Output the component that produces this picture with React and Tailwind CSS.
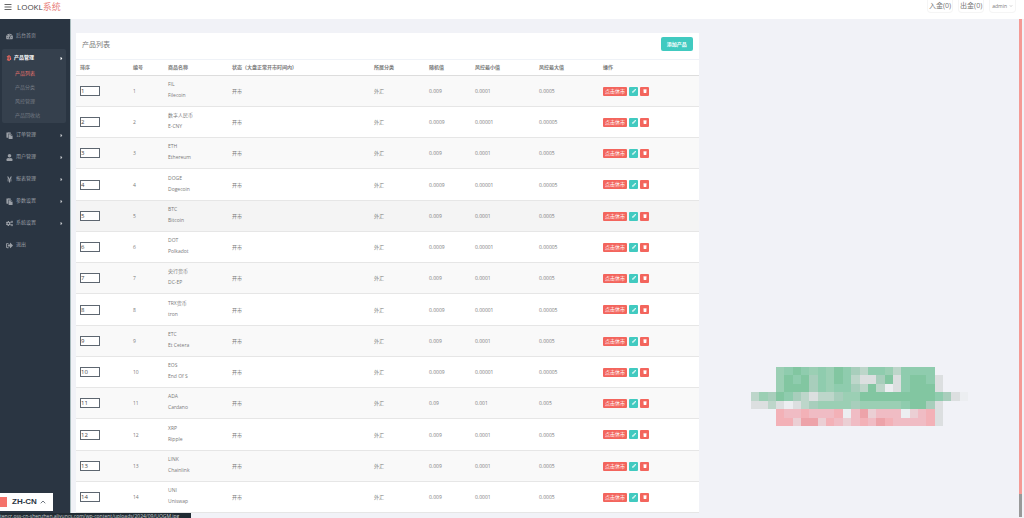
import React, { useState } from 'react';
import {
  FaBars,
  FaBtc,
  FaCaretRight,
  FaCogs,
  FaPaste,
  FaPencilAlt,
  FaSignOutAlt,
  FaTachometerAlt,
  FaTrash,
  FaUser,
  FaYenSign,
} from 'react-icons/fa';
import { ChevronDown, ChevronUp } from 'lucide-react';

const products = [
  { id: 1, name: 'FIL', alias: 'Filecoin', random: '0.009', min: '0.0001', max: '0.0005' },
  { id: 2, name: '数字人民币', alias: 'E-CNY', random: '0.0009', min: '0.00001', max: '0.00005' },
  { id: 3, name: 'ETH', alias: 'Ethereum', random: '0.009', min: '0.0001', max: '0.0005' },
  { id: 4, name: 'DOGE', alias: 'Dogecoin', random: '0.0009', min: '0.00001', max: '0.00005' },
  { id: 5, name: 'BTC', alias: 'Bitcoin', random: '0.009', min: '0.0001', max: '0.0005' },
  { id: 6, name: 'DOT', alias: 'Polkadot', random: '0.0009', min: '0.00001', max: '0.00005' },
  { id: 7, name: '央行货币', alias: 'DC-EP', random: '0.009', min: '0.0001', max: '0.0005' },
  { id: 8, name: 'TRX货币', alias: 'tron', random: '0.0009', min: '0.00001', max: '0.00005' },
  { id: 9, name: 'ETC', alias: 'Et Cetera', random: '0.009', min: '0.0001', max: '0.0005' },
  { id: 10, name: 'EOS', alias: 'End Of S', random: '0.0009', min: '0.00001', max: '0.00005' },
  { id: 11, name: 'ADA', alias: 'Cardano', random: '0.09', min: '0.001', max: '0.005' },
  { id: 12, name: 'XRP', alias: 'Ripple', random: '0.009', min: '0.0001', max: '0.0005' },
  { id: 13, name: 'LINK', alias: 'Chainlink', random: '0.009', min: '0.0001', max: '0.0005' },
  { id: 14, name: 'UNI', alias: 'Uniswap', random: '0.009', min: '0.0001', max: '0.0005' },
];

const columns = [
  { label: '排序', width: 'w-[57px]' },
  { label: '编号', width: 'w-[35px]' },
  { label: '商品名称', width: 'w-[64px]' },
  { label: '状态（大盘正常开市时间内)', width: 'w-[142px]' },
  { label: '所属分类', width: 'w-[55px]' },
  { label: '随机值', width: 'w-[46px]' },
  { label: '风控最小值', width: 'w-[64px]' },
  { label: '风控最大值', width: 'w-[64px]' },
  { label: '操作', width: '' },
];

const productLinks = ['产品列表', '产品分类', '风控管理', '产品回收站'];

const menu = [
  { label: '订单管理', icon: FaPaste, arrow: true },
  { label: '用户管理', icon: FaUser, arrow: true },
  { label: '报表管理', icon: FaYenSign, arrow: true },
  { label: '参数设置', icon: FaPaste, arrow: true },
  { label: '系统设置', icon: FaCogs, arrow: true },
  { label: '退出', icon: FaSignOutAlt, arrow: false },
];

// one letter per tile, see tileColors
const tiles = [
  '...mgGgmgmGglpggmpgggg....',
  '...mGgGlgmGgpwwlGwgGGgw...',
  '...mGGGlgmgglpGpxwgGGGw...',
  'pmlGglpwpplmmGGGGGGGGGglwx',
  'wwpwxwplmmmmlmmmmmgGGlw...',
  '...RPPRPPPRxPDqPPPxqPRw...',
  '...RRqDDqRPqPRPDRPPPPRw...',
];

const tileColors = {
  G: '#82c6a1',
  g: '#8fccae',
  m: '#9bcfb4',
  l: '#a8cebc',
  p: '#bdd6ca',
  w: '#dcdfe0',
  x: '#eceef1',
  P: '#f0bcc4',
  R: '#f3b1b7',
  D: '#eda3a9',
  q: '#ebcfd4',
};

const Mosaic = () => (
  <svg
    viewBox="0 0 26 7"
    preserveAspectRatio="none"
    className="h-[59px] w-[217px]"
    shapeRendering="crispEdges"
    aria-hidden="true"
  >
    {tiles.map((row, y) =>
      row.split('').map((tile, x) =>
        tile === '.' ? null : (
          <rect key={`${x}-${y}`} x={x} y={y} width="1" height="1" fill={tileColors[tile]} />
        )
      )
    )}
  </svg>
);

const Header = () => (
  <header className="flex h-[19px] items-start justify-between bg-white">
    <div className="flex h-3.5 items-center gap-[5px] pl-1">
      <button type="button" aria-label="菜单" className="text-[#666]">
        <FaBars className="h-2 w-2" />
      </button>
      <a href="#" className="text-[8px] leading-[14px] text-[#444]">
        LOOKL<span className="text-[9px] text-[#e8827c]">系统</span>
      </a>
    </div>
    <div className="flex gap-[5px] pr-2 leading-3 text-[#777]">
      <a href="#" className="rounded-b border border-t-0 border-[#f5f5f5] px-px text-[7px]">入金(0)</a>
      <a href="#" className="rounded-b border border-t-0 border-[#f5f5f5] px-px text-[7px]">出金(0)</a>
      <button
        type="button"
        className="flex items-center gap-0.5 rounded-b border border-t-0 border-[#f5f5f5] px-0.5 text-[5px] leading-3"
      >
        admin
        <ChevronDown className="h-1 w-1" />
      </button>
    </div>
  </header>
);

const Sidebar = () => (
  <aside className="w-[71px] shrink-0 border-r border-[#a9bcbe] bg-[#2a3542] pt-1.5 text-[5px] text-[#9a9fa6]">
    <nav>
      <a href="#" className="flex h-[22px] items-center gap-[3px] px-1.5">
        <FaTachometerAlt className="h-[7px] w-[7px]" />
        后台首页
      </a>
      <div className="mt-0.5 mr-1 mb-px ml-0.5 rounded-xs bg-[#35404d]">
        <a href="#" className="flex h-[18px] items-center gap-0.5 pr-0.5 pl-1 font-bold text-white">
          <FaBtc className="h-1.5 w-1.5 text-[#ff6c60]" />
          产品管理
          <FaCaretRight className="ml-auto h-[5px] w-[5px]" />
        </a>
        <ul>
          {productLinks.map((link, i) => (
            <li key={link}>
              <a
                href="#"
                className={
                  i === 0
                    ? 'flex h-3.5 items-center pl-[13px] text-[#ea736c]'
                    : 'flex h-3.5 items-center pl-[13px] text-[#757c85]'
                }
              >
                {link}
              </a>
            </li>
          ))}
        </ul>
      </div>
      {menu.map(({ label, icon: Icon, arrow }) => (
        <a href="#" key={label} className="flex h-[22px] items-center gap-[3px] px-1.5">
          <Icon className="h-[7px] w-[7px]" />
          {label}
          {arrow && <FaCaretRight className="ml-auto h-[5px] w-[5px] text-[#c5c8cc]" />}
        </a>
      ))}
    </nav>
  </aside>
);

const ProductTable = ({ orders, onOrderChange }) => (
  <table className="w-full table-fixed border-collapse text-left text-[5px] text-[#797979]">
    <thead>
      <tr className="h-4 border-t border-b border-t-[#eff2f7] border-b-[#ddd]">
        {columns.map((col) => (
          <th key={col.label} className={`${col.width} p-0 pr-1 first:pl-1 font-bold whitespace-nowrap`}>
            {col.label}
          </th>
        ))}
      </tr>
    </thead>
    <tbody className="[&>tr:nth-child(4n)]:h-8">
      {products.map((p) => (
        <tr
          key={p.id}
          className={`h-[31px] border-b border-[#e6e6e6] ${
            p.id === 5 ? 'bg-[#f4f4f4]' : p.id % 2 ? 'bg-[#f9f9f9]' : 'bg-white'
          }`}
        >
          <td className="p-0 pl-1">
            <input
              type="text"
              aria-label={`排序 ${p.name}`}
              value={orders[p.id]}
              onChange={(e) => onOrderChange(p.id, e.target.value)}
              className="block h-2.5 w-5 border border-[#5d6670] bg-white p-0 text-[6px] leading-none text-[#444]"
            />
          </td>
          <td className="p-0 pt-0.5">{p.id}</td>
          <td className="p-0 pb-0.5 leading-[11px]">
            <div>{p.name}</div>
            <div>{p.alias}</div>
          </td>
          <td className="p-0 pt-0.5">开市</td>
          <td className="p-0 pt-0.5">外汇</td>
          <td className="p-0 pt-0.5">{p.random}</td>
          <td className="p-0 pt-0.5">{p.min}</td>
          <td className="p-0 pt-0.5">{p.max}</td>
          <td className="p-0">
            <div className="flex gap-0.5 text-white">
              <button type="button" className="h-[9px] w-6 rounded-[1px] bg-[#f3655d] text-[5px] leading-[9px]">
                点击休市
              </button>
              <button
                type="button"
                aria-label="编辑"
                className="flex h-[9px] w-[9px] items-center justify-center rounded-[1px] bg-[#41cac0]"
              >
                <FaPencilAlt className="h-1 w-1" />
              </button>
              <button
                type="button"
                aria-label="删除"
                className="flex h-[9px] w-[9px] items-center justify-center rounded-[1px] bg-[#f3655d]"
              >
                <FaTrash className="h-1 w-1" />
              </button>
            </div>
          </td>
        </tr>
      ))}
    </tbody>
  </table>
);

const App = () => {
  const [orders, setOrders] = useState(() =>
    Object.fromEntries(products.map((p) => [p.id, String(p.id)]))
  );

  const handleOrderChange = (id, value) => {
    setOrders((prev) => ({ ...prev, [id]: value }));
  };

  return (
    <div className="flex min-h-screen flex-col bg-[#f1f2f7] font-['Open_Sans','Noto_Sans_CJK_SC',sans-serif]">
      <Header />
      <div className="flex flex-1">
        <Sidebar />
        <main className="flex flex-1 items-start pt-3.5 pb-[5px] pl-[5px]">
          <div className="w-2/3 pr-1.5">
            <section className="bg-white">
              <div className="flex h-[26px] items-start justify-between pt-1 pr-1.5 pl-1.5">
                <h1 className="text-[7px] leading-4 text-[#797979]">产品列表</h1>
                <button
                  type="button"
                  className="h-3.5 rounded-[2px] bg-[#41cac0] px-1.5 text-[5px] leading-[14px] font-bold text-white"
                >
                  添加产品
                </button>
              </div>
              <ProductTable orders={orders} onOrderChange={handleOrderChange} />
            </section>
          </div>
          <div className="flex w-1/3 justify-center pt-[334px] pr-1">
            <Mosaic />
          </div>
        </main>
        <div className="mr-0.5 flex w-[3px] flex-col pb-px">
          <div className="flex-1 bg-[#f59a95]" />
          <div className="h-[23px] bg-[#999]" />
        </div>
      </div>

      <button
        type="button"
        className="fixed bottom-[7px] left-0 flex h-[18px] items-center bg-white pr-1.5 text-[8px] font-bold text-[#2a3542] font-['Liberation_Sans',sans-serif]"
      >
        <span className="mr-[5px] h-2.5 w-[7px] bg-[#f5736b]" />
        ZH-CN
        <ChevronUp className="ml-0.5 h-2 w-2" />
      </button>
      <div className="fixed bottom-0 left-0 h-[5px] w-[191px] overflow-hidden bg-[#202b33] text-[5px] leading-[7px] whitespace-nowrap text-[#c5cbce]">
        tencr.oss-cn-shenzhen.aliyuncs.com/wp-content/uploads/2024/09/UOGM.jpg
      </div>
    </div>
  );
};

export default App;
